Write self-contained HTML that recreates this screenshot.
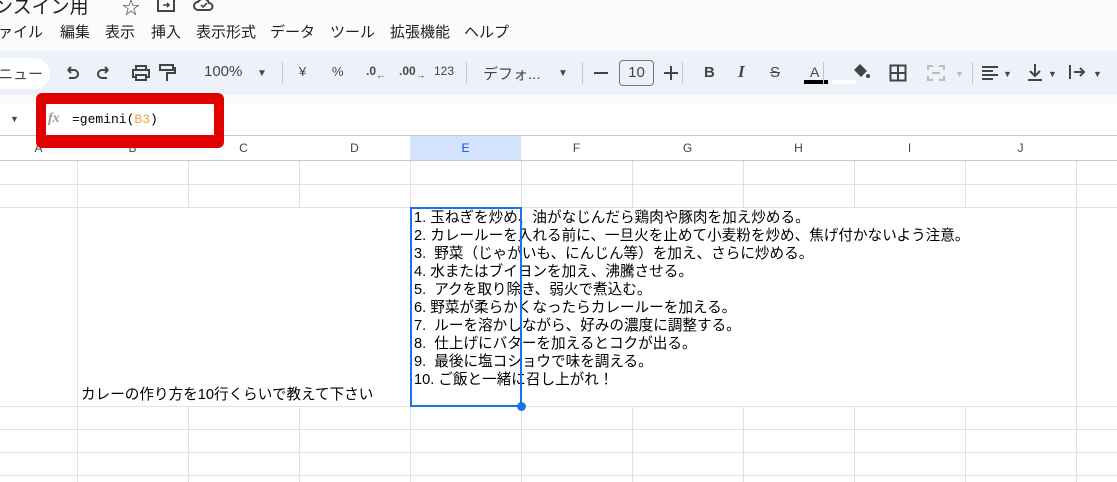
<!DOCTYPE html>
<html><head><meta charset="utf-8"><style>
*{margin:0;padding:0;box-sizing:border-box}
body{width:1117px;height:482px;overflow:hidden;background:#fff;font-family:"Liberation Sans","Noto Sans CJK JP",sans-serif;color:#1f1f1f;position:relative}
.a{position:absolute;white-space:nowrap}
.top{position:absolute;left:0;top:0;width:1117px;height:104px;background:#f9fbfd}
.tb{position:absolute;left:-20px;top:51px;width:1160px;height:44px;background:#edf2fa;border-radius:22px}
.m{position:absolute;top:21px;font-size:15px;color:#1f1f1f;white-space:nowrap}
.ic{position:absolute;top:64px;font-size:14px;color:#444746}
.vl{position:absolute;top:62px;width:1px;height:22px;background:#c4c7c5}
.col{position:absolute;top:136px;height:25px;border-right:1px solid #c4c7c5;border-bottom:1px solid #c4c7c5;background:#fff;font-size:12px;color:#444;text-align:center;line-height:25px}
.hl{position:absolute;left:0;width:1117px;height:1px;background:#e1e1e1}
.vg{position:absolute;top:161px;height:321px;width:1px;background:#e1e1e1}
.t{font-size:14.6px;line-height:18px;color:#000}
</style></head><body>
<div class="top"></div>
<div class="a" style="left:-6px;top:-8px;font-size:19px;color:#1f1f1f">ンスイン用</div>
<div class="a" style="left:122px;top:-6px;font-size:18px;color:#444">☆</div>
<svg class="a" style="left:156px;top:-2px" width="20" height="14"><rect x="2" y="1" width="16" height="12" fill="none" stroke="#444" stroke-width="2"/><path d="M7 7h6M11 5l2 2-2 2" stroke="#444" stroke-width="1.6" fill="none"/></svg>
<svg class="a" style="left:193px;top:-4px" width="22" height="16"><path d="M5 14a4 4 0 010-8 6 6 0 0111 1 3.5 3.5 0 010 7z" fill="none" stroke="#444" stroke-width="2"/><path d="M8 9l2 2 4-4" stroke="#444" stroke-width="1.6" fill="none"/></svg>
<div class="m" style="left:-2px">ァイル</div>
<div class="m" style="left:60px">編集</div>
<div class="m" style="left:105px">表示</div>
<div class="m" style="left:151px">挿入</div>
<div class="m" style="left:196px">表示形式</div>
<div class="m" style="left:270px">データ</div>
<div class="m" style="left:330px">ツール</div>
<div class="m" style="left:390px">拡張機能</div>
<div class="m" style="left:464px">ヘルプ</div>
<div class="tb"></div>
<div class="a" style="left:-20px;top:58px;width:70px;height:31px;background:#fff;border-radius:16px"></div>
<div class="a" style="left:-2px;top:63px;font-size:15px;color:#444746">ニュー</div>
<svg class="a" style="left:64px;top:66px" width="16" height="14"><path d="M4 4h6a4 4 0 010 8H5M4 4l3-3M4 4l3 3" fill="none" stroke="#444" stroke-width="2"/></svg>
<svg class="a" style="left:96px;top:66px" width="16" height="14"><path d="M12 4H6a4 4 0 000 8h5M12 4L9 1M12 4L9 7" fill="none" stroke="#444" stroke-width="2"/></svg>
<svg class="a" style="left:132px;top:65px" width="18" height="16"><rect x="4" y="1" width="10" height="4" fill="none" stroke="#444" stroke-width="2"/><rect x="1" y="5" width="16" height="7" fill="none" stroke="#444" stroke-width="2"/><rect x="4" y="10" width="10" height="5" fill="#edf2fa" stroke="#444" stroke-width="2"/></svg>
<svg class="a" style="left:158px;top:64px" width="18" height="18"><rect x="2" y="1" width="13" height="5" fill="none" stroke="#444" stroke-width="2"/><path d="M15 4h2v5H9v8" fill="none" stroke="#444" stroke-width="2"/></svg>
<div class="ic" style="left:204px;font-size:15px;top:63px">100%</div>
<div class="ic" style="left:257px;font-size:10px;top:68px">▼</div>
<div class="vl" style="left:282px"></div>
<div class="ic" style="left:299px;font-size:13px">¥</div>
<div class="ic" style="left:332px;font-size:13px">%</div>
<div class="ic" style="left:366px;font-size:12px;font-weight:bold">.0<sub>←</sub></div>
<div class="ic" style="left:399px;font-size:12px;font-weight:bold">.00<sub>→</sub></div>
<div class="ic" style="left:434px;font-size:12px">123</div>
<div class="vl" style="left:466px"></div>
<div class="ic" style="left:483px;font-size:15px;top:63px">デフォ...</div>
<div class="ic" style="left:558px;font-size:10px;top:68px">▼</div>
<div class="vl" style="left:582px"></div>
<div class="a" style="left:594px;top:72px;width:14px;height:2px;background:#444"></div>
<div class="a" style="left:619px;top:60px;width:35px;height:26px;border:1px solid #747775;border-radius:4px;font-size:15px;text-align:center;line-height:24px;color:#444">10</div>
<div class="a" style="left:664px;top:72px;width:14px;height:2px;background:#444"></div>
<div class="a" style="left:670px;top:66px;width:2px;height:14px;background:#444"></div>
<div class="vl" style="left:682px"></div>
<div class="ic" style="left:704px;font-weight:bold;font-size:15px">B</div>
<div class="ic" style="left:738px;font-style:italic;font-weight:bold;font-family:'Liberation Serif',serif;font-size:17px;top:62px">I</div>
<div class="ic" style="left:770px;font-size:15px;text-decoration:line-through">S</div>
<div class="ic" style="left:810px;font-size:14px">A</div>
<div class="a" style="left:804px;top:80px;width:24px;height:4px;background:#000"></div>
<div class="vl" style="left:823px"></div>
<svg class="a" style="left:851px;top:62px" width="20" height="18"><path d="M3 8l6-6 7 7-6 6z" fill="#444"/><circle cx="17" cy="14" r="2" fill="#444"/></svg>
<div class="a" style="left:832px;top:80px;width:24px;height:4px;background:#fff"></div>
<svg class="a" style="left:889px;top:64px" width="18" height="18"><rect x="1.5" y="1.5" width="15" height="15" fill="none" stroke="#444" stroke-width="2"/><path d="M9 1v16M1 9h16" stroke="#444" stroke-width="2"/></svg>
<svg class="a" style="left:927px;top:65px" width="18" height="16"><path d="M1 5V1h5M12 1h5v4M1 11v4h5M12 15h5v-4M5 8h8" stroke="#bbb" stroke-width="2" fill="none"/></svg>
<div class="ic" style="left:955px;font-size:9px;top:69px;color:#bbb">▼</div>
<div class="vl" style="left:972px"></div>
<svg class="a" style="left:981px;top:65px" width="18" height="16"><path d="M1 2h16M1 6h11M1 10h16M1 14h11" stroke="#444" stroke-width="2"/></svg>
<div class="ic" style="left:1003px;font-size:9px;top:69px">▼</div>
<svg class="a" style="left:1027px;top:63px" width="16" height="18"><path d="M8 1v12M3 8l5 5 5-5M1 17h14" stroke="#444" stroke-width="2" fill="none"/></svg>
<div class="ic" style="left:1048px;font-size:9px;top:69px">▼</div>
<svg class="a" style="left:1068px;top:64px" width="18" height="16"><path d="M2 1v14M6 8h10M12 4l4 4-4 4" stroke="#444" stroke-width="2" fill="none"/></svg>
<div class="ic" style="left:1093px;font-size:9px;top:69px">▼</div>
<!-- formula bar -->
<div class="a" style="left:0;top:104px;width:1117px;height:32px;background:#fff;border-bottom:1px solid #c4c7c5"></div>
<div class="a" style="left:10px;top:114px;font-size:9px;color:#444">▼</div>
<!-- column headers -->
<div class="col" style="left:0;width:78px">A</div>
<div class="col" style="left:77px;width:112px">B</div>
<div class="col" style="left:188px;width:112px">C</div>
<div class="col" style="left:299px;width:112px">D</div>
<div class="col" style="left:410px;width:112px;background:#d3e3fd;color:#0b57d0">E</div>
<div class="col" style="left:521px;width:112px">F</div>
<div class="col" style="left:632px;width:112px">G</div>
<div class="col" style="left:743px;width:112px">H</div>
<div class="col" style="left:854px;width:112px">I</div>
<div class="col" style="left:965px;width:112px">J</div>
<div class="col" style="left:1076px;width:60px"></div>
<div class="a" style="left:36px;top:93px;width:188px;height:55px;border:10px solid #e00000;border-top-width:11px;border-bottom-width:13px;border-radius:6px;background:#fff"></div>
<div class="a" style="left:48px;top:111px;font-size:14px;color:#999;font-style:italic;font-weight:bold;font-family:'Liberation Serif',serif">fx</div>
<div class="a" style="left:72px;top:112px;font-size:13px;font-family:'Liberation Mono',monospace;color:#000">=gemini(<span style="color:#f4a14e">B3</span>)</div>
<!-- grid -->
<div class="hl" style="top:184px"></div>
<div class="hl" style="top:207px"></div>
<div class="hl" style="top:406px"></div>
<div class="hl" style="top:429px"></div>
<div class="hl" style="top:452px"></div>
<div class="hl" style="top:475px"></div>
<div class="vg" style="left:77px"></div>
<div class="vg" style="left:188px;height:46px"></div><div class="vg" style="left:188px;top:406px;height:76px"></div>
<div class="vg" style="left:299px;height:46px"></div><div class="vg" style="left:299px;top:406px;height:76px"></div>
<div class="vg" style="left:410px"></div>
<div class="vg" style="left:521px;height:46px"></div><div class="vg" style="left:521px;top:406px;height:76px"></div>
<div class="vg" style="left:632px;height:46px"></div><div class="vg" style="left:632px;top:406px;height:76px"></div>
<div class="vg" style="left:743px;height:46px"></div><div class="vg" style="left:743px;top:406px;height:76px"></div>
<div class="vg" style="left:854px;height:46px"></div><div class="vg" style="left:854px;top:406px;height:76px"></div>
<div class="vg" style="left:965px;height:46px"></div><div class="vg" style="left:965px;top:406px;height:76px"></div>
<div class="vg" style="left:1076px"></div>
<div class="a" style="left:412px;top:208px;width:664px;height:197px;background:#fff"></div>
<div class="a t" style="left:81px;top:386px">カレーの作り方を10行くらいで教えて下さい</div>
<div class="a t" style="left:414px;top:209px">1. 玉ねぎを炒め、油がなじんだら鶏肉や豚肉を加え炒める。<br>2. カレールーを入れる前に、一旦火を止めて小麦粉を炒め、焦げ付かないよう注意。<br>3.&nbsp; 野菜（じゃがいも、にんじん等）を加え、さらに炒める。<br>4. 水またはブイヨンを加え、沸騰させる。<br>5.&nbsp; アクを取り除き、弱火で煮込む。<br>6. 野菜が柔らかくなったらカレールーを加える。<br>7.&nbsp; ルーを溶かしながら、好みの濃度に調整する。<br>8.&nbsp; 仕上げにバターを加えるとコクが出る。<br>9.&nbsp; 最後に塩コショウで味を調える。<br>10. ご飯と一緒に召し上がれ！</div>
<div class="a" style="left:410px;top:207px;width:112px;height:200px;border:2px solid #1a73e8"></div>
<div class="a" style="left:517px;top:402px;width:9px;height:9px;border-radius:50%;background:#1a73e8"></div>
</body></html>
